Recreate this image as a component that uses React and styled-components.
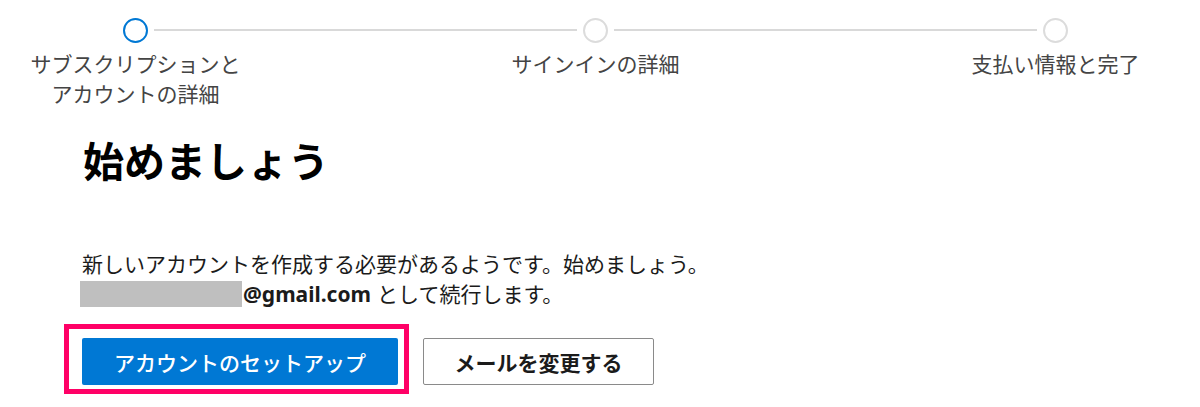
import React from "react";
import styled, { createGlobalStyle } from "styled-components";

const Global = createGlobalStyle`
  html, body { margin: 0; padding: 0; background: #fff; }
  body {
    font-family: "Noto Sans", "Noto Sans CJK JP", sans-serif;
    color: #1b1b1b;
    -webkit-font-smoothing: antialiased;
  }
  * { box-sizing: border-box; }
`;

const Page = styled.div`
  width: 1200px;
  height: 407px;
  overflow: hidden;
  padding-top: 18px;
`;

const Stepper = styled.div`
  display: flex;
  align-items: flex-start;
  padding: 0 132px 0 123px;
`;

const Step = styled.div`
  width: 25px;
  display: flex;
  flex-direction: column;
  align-items: center;
  flex: none;
`;

const Dot = styled.div`
  width: 25px;
  height: 25px;
  border-radius: 50%;
  border: ${(p) => (p.$active ? "2.5px solid #0078d4" : "2.5px solid #dcdcdc")};
  background: #fff;
`;

const Connector = styled.div`
  flex: 1;
  height: 2px;
  margin: 11px 6px 0;
  background: #d9d9d9;
`;

const StepLabel = styled.div`
  margin-top: 6px;
  white-space: nowrap;
  text-align: center;
  font-size: 21px;
  line-height: 30px;
  color: #444;
`;

const Main = styled.div`
  padding-left: 64px;
`;

const Heading = styled.h1`
  margin: 28px 0 0 19px;
  font-size: 41px;
  line-height: 49px;
  font-weight: 700;
  color: #000;
`;

const Text = styled.div`
  margin: 63px 0 0 18px;
  font-size: 21px;
  line-height: 30px;
  color: #1b1b1b;
`;

const Line = styled.div`
  display: flex;
  align-items: center;
  height: 30px;
  white-space: nowrap;
`;

const Redacted = styled.span`
  display: inline-block;
  width: 162px;
  height: 26px;
  background: #bfbfbf;
  margin-left: -2px;
  margin-right: 1px;
`;

const Email = styled.b`
  font-weight: 700;
  margin-right: 6px;
`;

const Actions = styled.div`
  display: flex;
  align-items: flex-start;
  gap: 14px;
  margin-top: 15px;
`;

const Highlight = styled.div`
  border: 5px solid #ff0066;
  padding: 9px 6px 4px 13px;
`;

const Button = styled.button`
  height: 47px;
  width: ${(p) => p.$w}px;
  margin-top: ${(p) => p.$mt || 0}px;
  border-radius: 2px;
  font-family: "Noto Sans", "Noto Sans CJK JP", sans-serif;
  font-size: 21px;
  font-weight: ${(p) => (p.$primary ? 500 : 700)};
  padding: 0;
  cursor: pointer;
  display: flex;
  align-items: center;
  justify-content: center;
  background: ${(p) => (p.$primary ? "#0078d4" : "#fff")};
  color: ${(p) => (p.$primary ? "#fff" : "#1b1b1b")};
  border: ${(p) => (p.$primary ? "none" : "1.5px solid #8a8a8a")};
`;

const steps = [
  { label: ["サブスクリプションと", "アカウントの詳細"], active: true },
  { label: ["サインインの詳細"] },
  { label: ["支払い情報と完了"] },
];

export default function App() {
  return (
    <>
      <Global />
      <Page>
        <Stepper>
          {steps.map((s, i) => (
            <React.Fragment key={i}>
              {i > 0 && <Connector />}
              <Step>
                <Dot $active={s.active} />
                <StepLabel>
                  {s.label.map((l, j) => (
                    <div key={j}>{l}</div>
                  ))}
                </StepLabel>
              </Step>
            </React.Fragment>
          ))}
        </Stepper>
        <Main>
          <Heading>始めましょう</Heading>
          <Text>
            <Line>新しいアカウントを作成する必要があるようです。始めましょう。</Line>
            <Line>
              <Redacted />
              <Email>@gmail.com</Email>
              として続行します。
            </Line>
          </Text>
          <Actions>
            <Highlight>
              <Button $primary $w={316}>アカウントのセットアップ</Button>
            </Highlight>
            <Button $w={231} $mt={14}>メールを変更する</Button>
          </Actions>
        </Main>
      </Page>
    </>
  );
}
